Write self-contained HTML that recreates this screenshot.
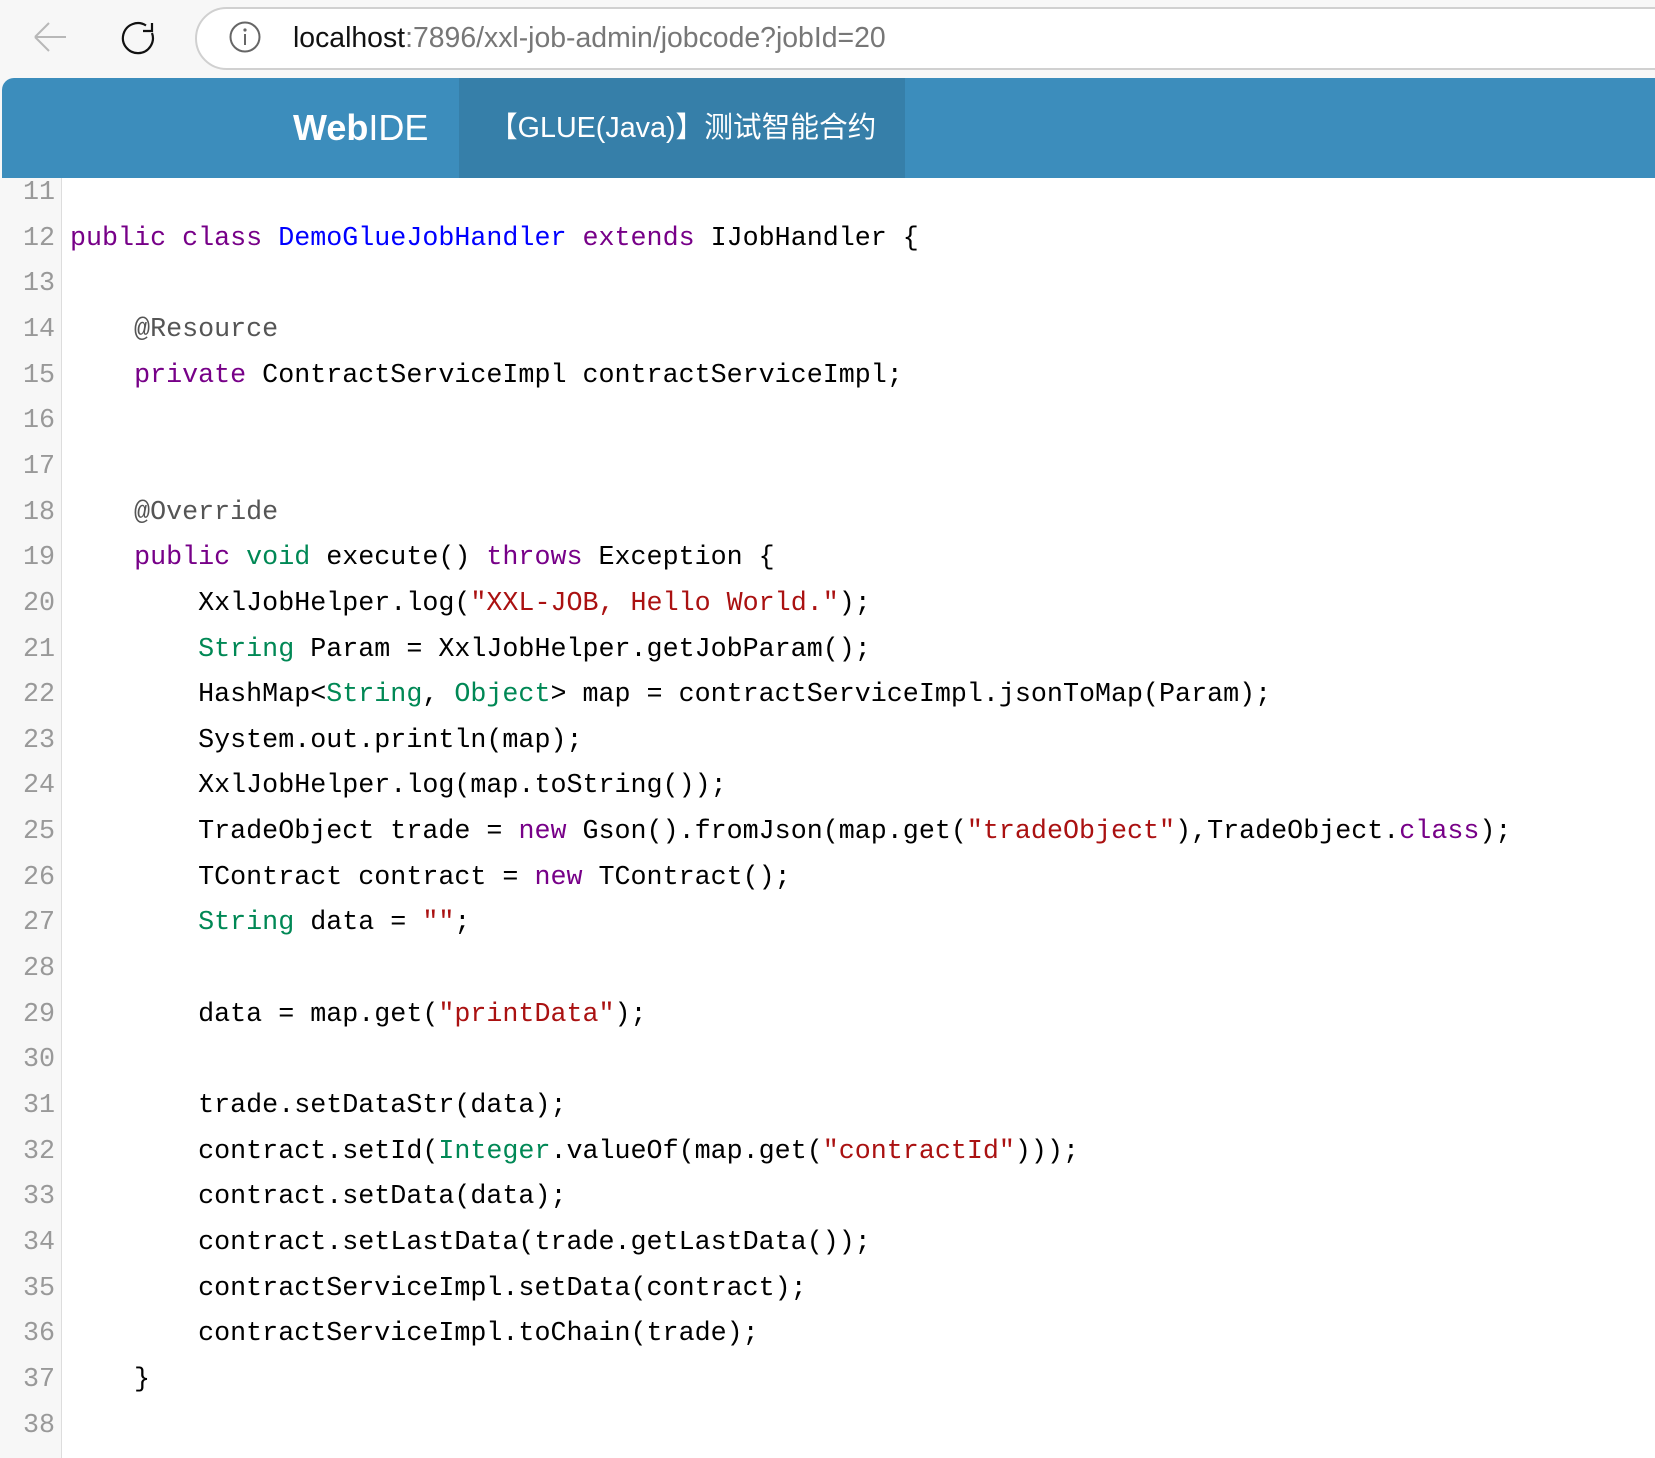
<!DOCTYPE html>
<html><head><meta charset="utf-8">
<style>
*{margin:0;padding:0;box-sizing:border-box}
html,body{width:1655px;height:1442px;overflow:hidden;background:#f7f7f7;font-family:"Liberation Sans","Noto Sans CJK SC",sans-serif}
#bar{position:absolute;left:0;top:0;width:1655px;height:78px;background:#f7f7f7}
#url{position:absolute;left:195px;top:7px;width:1500px;height:63px;border:2px solid #d0d0d0;border-radius:32px;background:#fff}
#urltext{position:absolute;left:293px;top:20px;font-size:28.4px;color:#777;white-space:nowrap;line-height:36px}
#urltext b{font-weight:normal;color:#111}
#page{position:absolute;left:2px;top:78px;width:1660px;height:1380px;background:#fff;border-top-left-radius:12px;overflow:hidden}
#hdr{position:absolute;left:0;top:0;width:100%;height:100px;background:#3c8dbc;z-index:2}
#logo{position:absolute;left:291px;top:26px;font-size:36px;color:#fff;line-height:48px}
#tab{position:absolute;left:457px;top:0;width:446px;height:100px;background:#367fa9}
#title{position:absolute;left:487px;top:27px;font-size:28.7px;color:#fff;line-height:46px;white-space:nowrap}
#gut{position:absolute;left:0;top:0;width:60px;height:100%;background:#f7f7f7;border-right:1px solid #ddd}
#code{position:absolute;left:0;top:93px;font-family:"Liberation Mono",monospace;font-size:26.7px;line-height:45.65px;white-space:pre}
.ln{position:absolute;left:0;width:53px;text-align:right;color:#999}
.tx{position:absolute;left:68px;color:#000}
.k{color:#708}.d{color:#00f}.t{color:#085}.s{color:#a11}.m{color:#555}
</style></head><body>
<div id="bar">
<svg width="190" height="78" style="position:absolute;left:0;top:0">
<path d="M35 37 H66 M35 37 L49 23 M35 37 L49 51" stroke="#b8b8b8" stroke-width="2" fill="none"/>
<path d="M152 33 A15 15 0 1 1 146 25.5" stroke="#111" stroke-width="2.2" fill="none"/>
<path d="M143 31 H152 V23" stroke="#111" stroke-width="2.2" fill="none"/>
</svg>
<div id="url"></div>
<svg width="40" height="40" style="position:absolute;left:226px;top:18px">
<circle cx="19" cy="19" r="14.5" stroke="#666" stroke-width="2" fill="none"/>
<circle cx="19" cy="12" r="1.6" fill="#666"/>
<path d="M19 16 V27" stroke="#666" stroke-width="2"/>
</svg>
<div id="urltext"><b>localhost</b>:7896/xxl-job-admin/jobcode?jobId=20</div>
</div>
<div id="page">
<div id="hdr">
<div id="logo"><b>Web</b>IDE</div>
<div id="tab"></div>
<div id="title">【GLUE(Java)】测试智能合约</div>
</div>
<div id="gut"></div>
<div id="code">
<div class="ln" style="top:0">11</div>
<div class="ln" style="top:45.65px">12</div><div class="tx" style="top:45.65px"><span class="k">public class</span> <span class="d">DemoGlueJobHandler</span> <span class="k">extends</span> IJobHandler {</div>
<div class="ln" style="top:91.3px">13</div>
<div class="ln" style="top:136.95px">14</div><div class="tx m" style="top:136.95px">    @Resource</div>
<div class="ln" style="top:182.6px">15</div><div class="tx" style="top:182.6px">    <span class="k">private</span> ContractServiceImpl contractServiceImpl;</div>
<div class="ln" style="top:228.25px">16</div>
<div class="ln" style="top:273.9px">17</div>
<div class="ln" style="top:319.55px">18</div><div class="tx m" style="top:319.55px">    @Override</div>
<div class="ln" style="top:365.2px">19</div><div class="tx" style="top:365.2px">    <span class="k">public</span> <span class="t">void</span> execute() <span class="k">throws</span> Exception {</div>
<div class="ln" style="top:410.85px">20</div><div class="tx" style="top:410.85px">        XxlJobHelper.log(<span class="s">"XXL-JOB, Hello World."</span>);</div>
<div class="ln" style="top:456.5px">21</div><div class="tx" style="top:456.5px">        <span class="t">String</span> Param = XxlJobHelper.getJobParam();</div>
<div class="ln" style="top:502.15px">22</div><div class="tx" style="top:502.15px">        HashMap&lt;<span class="t">String</span>, <span class="t">Object</span>&gt; map = contractServiceImpl.jsonToMap(Param);</div>
<div class="ln" style="top:547.8px">23</div><div class="tx" style="top:547.8px">        System.out.println(map);</div>
<div class="ln" style="top:593.45px">24</div><div class="tx" style="top:593.45px">        XxlJobHelper.log(map.toString());</div>
<div class="ln" style="top:639.1px">25</div><div class="tx" style="top:639.1px">        TradeObject trade = <span class="k">new</span> Gson().fromJson(map.get(<span class="s">"tradeObject"</span>),TradeObject.<span class="k">class</span>);</div>
<div class="ln" style="top:684.75px">26</div><div class="tx" style="top:684.75px">        TContract contract = <span class="k">new</span> TContract();</div>
<div class="ln" style="top:730.4px">27</div><div class="tx" style="top:730.4px">        <span class="t">String</span> data = <span class="s">""</span>;</div>
<div class="ln" style="top:776.05px">28</div>
<div class="ln" style="top:821.7px">29</div><div class="tx" style="top:821.7px">        data = map.get(<span class="s">"printData"</span>);</div>
<div class="ln" style="top:867.35px">30</div>
<div class="ln" style="top:913px">31</div><div class="tx" style="top:913px">        trade.setDataStr(data);</div>
<div class="ln" style="top:958.65px">32</div><div class="tx" style="top:958.65px">        contract.setId(<span class="t">Integer</span>.valueOf(map.get(<span class="s">"contractId"</span>)));</div>
<div class="ln" style="top:1004.3px">33</div><div class="tx" style="top:1004.3px">        contract.setData(data);</div>
<div class="ln" style="top:1049.95px">34</div><div class="tx" style="top:1049.95px">        contract.setLastData(trade.getLastData());</div>
<div class="ln" style="top:1095.6px">35</div><div class="tx" style="top:1095.6px">        contractServiceImpl.setData(contract);</div>
<div class="ln" style="top:1141.25px">36</div><div class="tx" style="top:1141.25px">        contractServiceImpl.toChain(trade);</div>
<div class="ln" style="top:1186.9px">37</div><div class="tx" style="top:1186.9px">    }</div>
<div class="ln" style="top:1232.55px">38</div>
</div>
</div>
</body></html>
